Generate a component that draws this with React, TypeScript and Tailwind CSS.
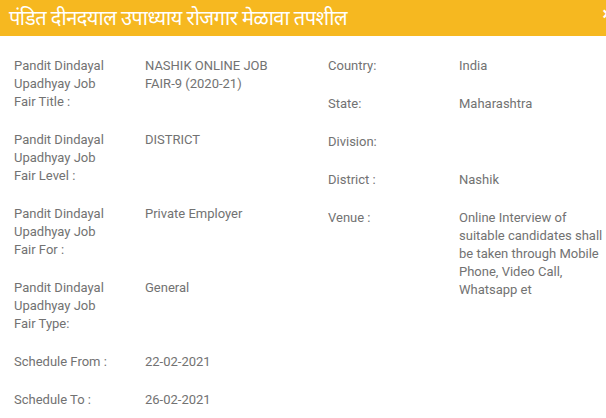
import React from 'react';

interface Field {
  label: string;
  value: string;
}

const leftFields: Field[] = [
  { label: 'Pandit Dindayal Upadhyay Job Fair Title :', value: 'NASHIK ONLINE JOB FAIR-9 (2020-21)' },
  { label: 'Pandit Dindayal Upadhyay Job Fair Level :', value: 'DISTRICT' },
  { label: 'Pandit Dindayal Upadhyay Job Fair For :', value: 'Private Employer' },
  { label: 'Pandit Dindayal Upadhyay Job Fair Type:', value: 'General' },
  { label: 'Schedule From :', value: '22-02-2021' },
  { label: 'Schedule To :', value: '26-02-2021' },
];

const rightFields: Field[] = [
  { label: 'Country:', value: 'India' },
  { label: 'State:', value: 'Maharashtra' },
  { label: 'Division:', value: '' },
  { label: 'District :', value: 'Nashik' },
  {
    label: 'Venue :',
    value: 'Online Interview of suitable candidates shall be taken through Mobile Phone, Video Call, Whatsapp et',
  },
];

const Row: React.FC<{ field: Field; valueWidth: string }> = ({ field, valueWidth }) => (
  <div className="flex py-[10px]">
    <div className="w-[131px] shrink-0 pr-[28px]">{field.label}</div>
    <div className={valueWidth}>{field.value}</div>
  </div>
);

const App: React.FC = () => (
  <div
    className="w-[606px] h-[418px] overflow-hidden bg-white"
    style={{ fontFamily: 'Roboto, "Noto Sans", sans-serif' }}
  >
    <div className="h-[36px] bg-[#f6b820] flex items-center justify-between pl-[9px] overflow-hidden">
      <h4 className="text-white text-[20px] leading-none tracking-[-0.5px] whitespace-nowrap" style={{ fontFamily: '"Noto Sans", "DejaVu Sans", sans-serif' }}>
        पंडित दीनदयाल उपाध्याय रोजगार मेळावा तपशील
      </h4>
      <span className="text-white font-bold text-[18px] leading-none translate-x-[6px] -translate-y-[4px]">×</span>
    </div>
    <div className="flex pl-[14px] pt-[11px] text-[13px] leading-[18px] text-[#727272]">
      <div className="w-[314px] shrink-0">
        {leftFields.map((f) => (
          <Row key={f.label} field={f} valueWidth="w-[150px]" />
        ))}
      </div>
      <div className="w-[278px] shrink-0">
        {rightFields.map((f) => (
          <Row key={f.label} field={f} valueWidth="w-[147px]" />
        ))}
      </div>
    </div>
  </div>
);

export default App;
